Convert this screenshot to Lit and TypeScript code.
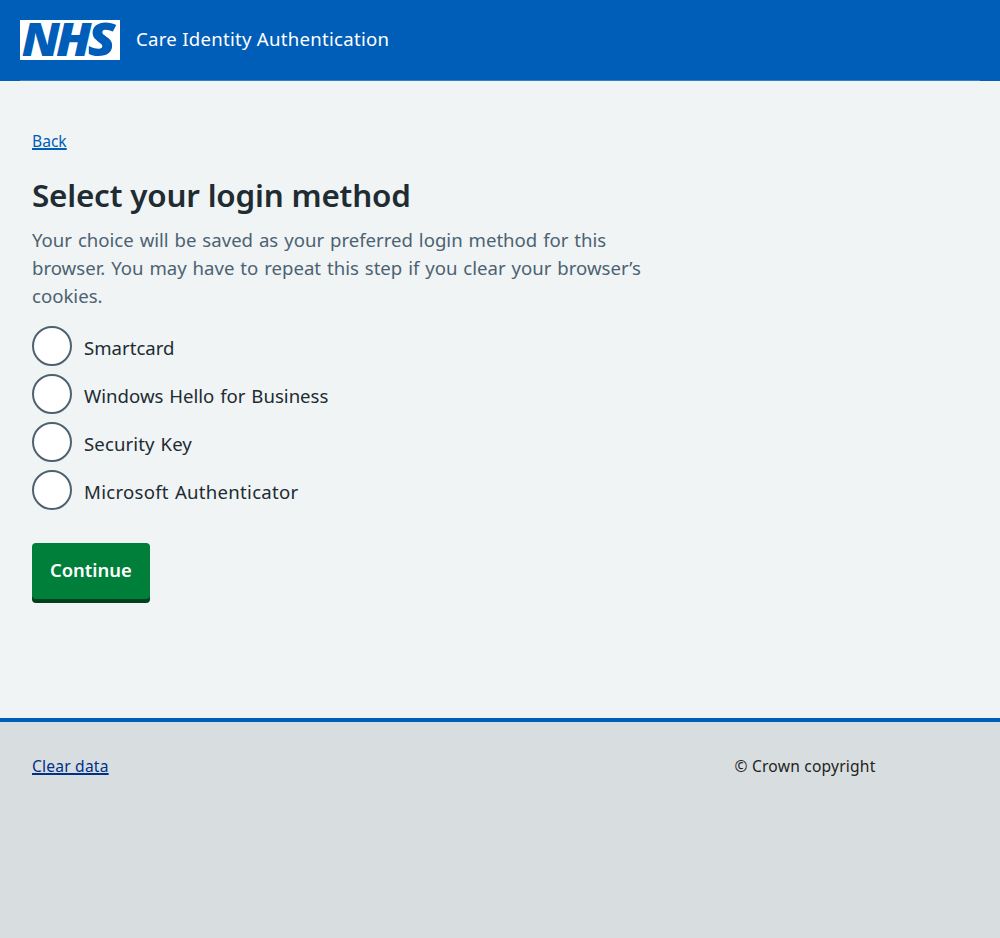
import { LitElement, html, css } from "lit";
import { customElement, state } from "lit/decorators.js";

const METHODS = [
  { label: "Smartcard", cls: "m1" },
  { label: "Windows Hello for Business", cls: "m2" },
  { label: "Security Key", cls: "m3" },
  { label: "Microsoft Authenticator", cls: "m4" },
];

@customElement("app-root")
export class AppRoot extends LitElement {
  @state() private selected = "";

  static styles = css`
    :host {
      display: flex;
      flex-direction: column;
      box-sizing: border-box;
      min-height: 938px;
      background: #f0f4f5;
      color: #212b32;
      font-family: "Noto Sans", "Open Sans", sans-serif;
      font-size: 18.6px;
      line-height: 28px;
    }
    .header {
      height: 81px;
      padding: 0 20px;
      background: #005eb8;
      color: #fff;
    }
    .bar {
      display: flex;
      align-items: center;
      box-sizing: border-box;
      height: 81px;
      gap: 16px;
      border-bottom: 1px solid #337ec6;
    }
    .logo {
      display: block;
      width: 100px;
      height: 40px;
      overflow: visible;
    }
    .letter {
      font-family: "Open Sans", "Liberation Sans", sans-serif;
      font-weight: 800;
      font-style: italic;
      fill: #005eb8;
    }
    .service {
      letter-spacing: 0.27px;
      padding-bottom: 2px;
    }
    .main {
      height: 637.33px;
      box-sizing: border-box;
      padding: 48px 32px 0;
    }
    .back {
      display: block;
      width: max-content;
      font-size: 15.6px;
      line-height: 24px;
      color: #005eb8;
      text-decoration: underline;
      text-decoration-thickness: 1.5px;
    }
    h1 {
      margin: 19px 0 0;
      font-size: 31.4px;
      line-height: 46px;
      font-weight: 600;
      letter-spacing: -0.19px;
    }
    .hint {
      margin: 8px 0 0;
      width: 624px;
      color: #4c6272;
      word-spacing: 1.05px;
    }
    .radios {
      display: flex;
      flex-direction: column;
      gap: 8px;
      margin-top: 16.45px;
    }
    .radio {
      display: flex;
      align-items: center;
      gap: 12px;
      height: 40px;
      word-spacing: 1px;
    }
    .radio input {
      appearance: none;
      box-sizing: border-box;
      flex: none;
      width: 40px;
      height: 40px;
      margin: 0;
      border: 2px solid #4c6272;
      border-radius: 50%;
      background: #fff;
    }
    .radio input:checked {
      background: radial-gradient(#212b32 10px, #fff 11px);
    }
    .radio span { padding-top: 3.3px; }
    .m3 { letter-spacing: 0.1px; }
    .m4 { letter-spacing: 0.27px; }
    .continue {
      display: block;
      box-sizing: border-box;
      width: 117.6px;
      height: 56px;
      margin: 32.2px 0 0;
      padding: 0 0 2px;
      border: 0;
      border-radius: 4px;
      background: #007f3b;
      box-shadow: 0 4px 0 #00401e;
      color: #fff;
      font: 600 18.4px/28px "Noto Sans", "Open Sans", sans-serif;
    }
    .footer {
      flex: 1;
      display: flex;
      justify-content: space-between;
      align-items: flex-start;
      border-top: 4px solid #005eb8;
      background: #d8dde0;
      color: #231f20;
      padding: 32px 124.5px 0 32px;
      font-size: 15.6px;
      line-height: 24px;
      letter-spacing: 0.2px;
    }
    .clear {
      color: #003087;
      text-decoration-thickness: 1.5px;
    }
  `;

  render() {
    return html`
      <header class="header">
        <div class="bar">
          <svg class="logo" viewBox="0 0 100 40" role="img" aria-label="NHS">
            <rect width="100" height="40" fill="#fff"></rect>
            <text class="letter" font-size="45.5" y="36.2" x="1.8" textLength="38.2" lengthAdjust="spacingAndGlyphs">N</text>
            <text class="letter" font-size="45.5" y="36.2" x="36" textLength="35.5" lengthAdjust="spacingAndGlyphs">H</text>
            <text class="letter" font-size="45.5" y="36" x="67.8" textLength="28" lengthAdjust="spacingAndGlyphs">S</text>
          </svg>
          <span class="service">Care Identity Authentication</span>
        </div>
      </header>
      <main class="main">
        <a class="back" href="#">Back</a>
        <h1>Select your login method</h1>
        <p class="hint">
          Your choice will be saved as your preferred login method for this<br />
          browser. You may have to repeat this step if you clear your browser’s<br />
          cookies.
        </p>
        <div class="radios">
          ${METHODS.map(
            (m) => html`<label class="radio">
              <input
                type="radio"
                name="method"
                .checked=${this.selected === m.label}
                @change=${() => (this.selected = m.label)}
              />
              <span class=${m.cls}>${m.label}</span>
            </label>`,
          )}
        </div>
        <button class="continue">Continue</button>
      </main>
      <footer class="footer">
        <a class="clear" href="#">Clear data</a>
        <span class="copy">© Crown copyright</span>
      </footer>
    `;
  }
}
